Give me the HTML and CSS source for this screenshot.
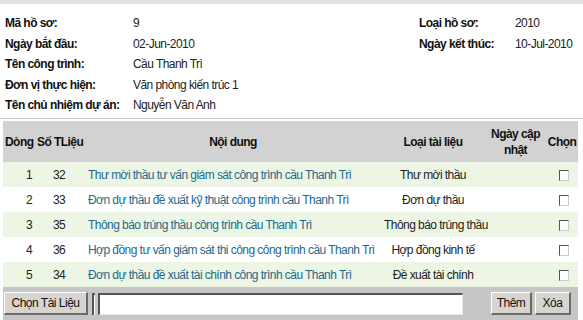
FILE: index.html
```html
<!DOCTYPE html>
<html>
<head>
<meta charset="utf-8">
<link rel="stylesheet" href="styles.css">
</head>
<body>
<div class="topbar"></div>
<div class="info">
  <div class="lbl">Mã hồ sơ:</div><div class="val">9</div><div class="lbl">Loại hồ sơ:</div><div class="val">2010</div>
  <div class="lbl">Ngày bắt đầu:</div><div class="val">02-Jun-2010</div><div class="lbl">Ngày kết thúc:</div><div class="val">10-Jul-2010</div>
  <div class="lbl">Tên công trình:</div><div class="val wide">Cầu Thanh Trì</div>
  <div class="lbl">Đơn vị thực hiện:</div><div class="val wide">Văn phòng kiến trúc 1</div>
  <div class="lbl">Tên chủ nhiệm dự án:</div><div class="val wide">Nguyễn Văn Anh</div>
</div>
<div class="sep"></div>
<table class="docs">
  <colgroup>
    <col class="c-row"><col class="c-no"><col class="c-content"><col class="c-type"><col class="c-date"><col class="c-pick">
  </colgroup>
  <thead>
    <tr><th class="h-row">Dòng</th><th class="h-no">Số TLiệu</th><th>Nội dung</th><th>Loại tài liệu</th><th>Ngày cập<br>nhật</th><th>Chọn</th></tr>
  </thead>
  <tbody>
    <tr class="alt"><td class="n">1</td><td class="c">32</td><td><a href="#">Thư mời thầu tư vấn giám sát công trình cầu Thanh Trì</a></td><td class="c">Thư mời thầu</td><td></td><td class="c"><span class="cb"></span></td></tr>
    <tr><td class="n">2</td><td class="c">33</td><td><a href="#">Đơn dự thầu đề xuất kỹ thuật công trình cầu Thanh Trì</a></td><td class="c">Đơn dự thầu</td><td></td><td class="c"><span class="cb"></span></td></tr>
    <tr class="alt"><td class="n">3</td><td class="c">35</td><td><a href="#">Thông báo trúng thầu công trình cầu Thanh Trì</a></td><td class="c">Thông báo trúng thầu</td><td></td><td class="c"><span class="cb"></span></td></tr>
    <tr><td class="n">4</td><td class="c">36</td><td><a href="#">Hợp đồng tư vấn giám sát thi công công trình cầu Thanh Trì</a></td><td class="c">Hợp đồng kinh tế</td><td></td><td class="c"><span class="cb"></span></td></tr>
    <tr class="alt"><td class="n">5</td><td class="c">34</td><td><a href="#">Đơn dự thầu đề xuất tài chính công trình cầu Thanh Trì</a></td><td class="c">Đề xuất tài chính</td><td></td><td class="c"><span class="cb"></span></td></tr>
  </tbody>
</table>
<div class="footer">
  <button class="btn pick">Chọn Tài Liệu</button>
  <span class="mini"></span>
  <span class="field"></span>
  <button class="btn add">Thêm</button>
  <button class="btn del">Xóa</button>
</div>
</body>
</html>
```
FILE: styles.css
```css
html, body {
  margin: 0;
  padding: 0;
  background: #fff;
}
body {
  font-family: "Liberation Sans", Arial, sans-serif;
  font-size: 12px;
  letter-spacing: -0.55px;
  color: #1a1a1a;
  width: 583px;
  height: 320px;
  overflow: hidden;
}
.topbar {
  height: 4px;
  background: #e4e4e4;
}
.info {
  display: grid;
  grid-template-columns: 128px 286px 96px 1fr;
  grid-auto-rows: 20.5px;
  align-items: center;
  padding: 9px 0 0 5px;
  box-sizing: border-box;
  height: 114px;
}
.lbl {
  font-weight: bold;
  color: #111;
  white-space: nowrap;
}
.val {
  color: #222;
  white-space: nowrap;
}
.val.wide {
  grid-column: 2 / 5;
}
.sep {
  height: 1px;
  background: #c4c4c4;
  margin: 0 0 2px 0;
}
.docs {
  width: 575px;
  margin: 0 0 0 3px;
  border-collapse: collapse;
  table-layout: fixed;
}
.c-row { width: 30px; }
.c-no { width: 52px; }
.c-content { width: 296px; }
.c-type { width: 104px; }
.c-date { width: 61px; }
.c-pick { width: 32px; }
.docs thead tr { height: 41px; }
.docs tbody tr { height: 25px; }
.docs th {
  background: #d2d2d2;
  padding: 0;
  font-weight: bold;
  color: #111;
  text-align: center;
  line-height: 16px;
  white-space: nowrap;
}
.docs th.h-row { text-align: left; padding-left: 2px; }
.docs th.h-no { text-align: left; padding-left: 4px; }
.docs td {
  padding: 0 3px;
  line-height: 16px;
  white-space: nowrap;
  color: #222;
}
.docs tr.alt td {
  background: #edf5e4;
}
.docs td.n {
  text-align: right;
  padding-right: 1px;
}
.docs td.c {
  text-align: center;
}
.docs a {
  color: #236a8c;
  text-decoration: none;
}
.cb {
  display: inline-block;
  width: 8px;
  height: 9px;
  background: #fff;
  border-top: 1px solid #555;
  border-left: 1px solid #555;
  border-right: 1px solid #ccc;
  border-bottom: 1px solid #ccc;
  vertical-align: middle;
  margin-left: 3px;
}
.footer {
  display: flex;
  align-items: center;
  margin: 0 5px 0 3px;
  height: 33px;
  background: #c6c6c6;
  padding: 0 7px 0 1px;
  box-sizing: border-box;
}
.btn {
  font-family: "Liberation Sans", Arial, sans-serif;
  font-size: 12px;
  letter-spacing: -0.5px;
  color: #111;
  background: #d8d5ce;
  border-top: 1px solid #fff;
  border-left: 1px solid #fff;
  border-right: 2px solid #6a6a6a;
  border-bottom: 2px solid #6a6a6a;
  height: 23px;
  padding: 0;
  box-sizing: border-box;
}
.pick { width: 84px; }
.mini {
  width: 3px;
  height: 22px;
  margin-left: 4px;
  background: #fff;
  border-left: 2px solid #555;
  border-top: 2px solid #555;
  box-sizing: border-box;
}
.field {
  width: 365px;
  height: 22px;
  margin-left: 3px;
  background: #fff;
  border-left: 2px solid #555;
  border-top: 2px solid #555;
  border-right: 1px solid #e8e8e8;
  border-bottom: 1px solid #e8e8e8;
  box-sizing: border-box;
}
.add {
  width: 41px;
  margin-left: auto;
}
.del {
  width: 36px;
  margin-left: 3px;
}
```
